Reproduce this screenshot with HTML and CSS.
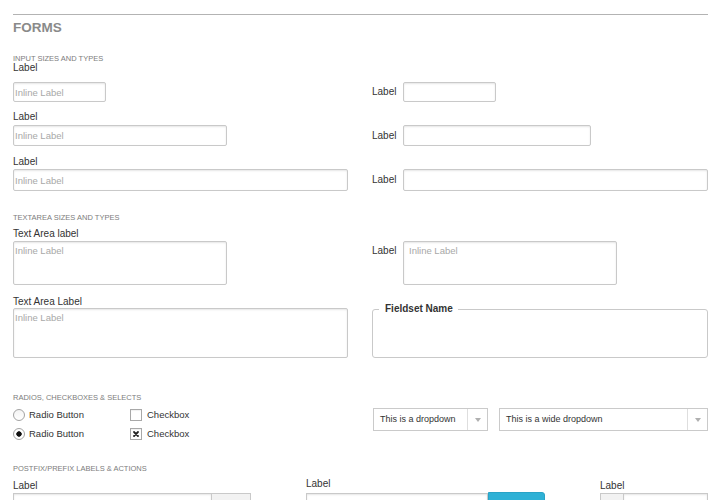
FILE: index.html
```html
<!DOCTYPE html>
<html lang="en">
<head>
<meta charset="utf-8">
<title>Forms</title>
<link rel="stylesheet" href="styles.css">
</head>
<body>
<div class="page">
  <hr class="rule">
  <h2 class="title">FORMS</h2>

  <h6 class="sub sub-inputs">Input sizes and types</h6>
  <div class="pair r1">
    <div class="stack">
      <label class="lbl">Label</label>
      <input class="in h20 w93" placeholder="Inline Label">
    </div>
    <div class="inline">
      <label class="ilbl">Label</label>
      <input class="in h20 w93">
    </div>
  </div>
  <div class="pair r2">
    <div class="stack">
      <label class="lbl">Label</label>
      <input class="in h21 w214" placeholder="Inline Label">
    </div>
    <div class="inline">
      <label class="ilbl">Label</label>
      <input class="in h21 w188">
    </div>
  </div>
  <div class="pair r3">
    <div class="stack">
      <label class="lbl">Label</label>
      <input class="in h22 wfull" placeholder="Inline Label">
    </div>
    <div class="inline">
      <label class="ilbl">Label</label>
      <input class="in h22 w305">
    </div>
  </div>

  <h6 class="sub sub-ta">Textarea sizes and types</h6>
  <div class="pair t1">
    <div class="stack">
      <label class="lbl">Text Area label</label>
      <textarea class="ta ta44 w214" placeholder="Inline Label"></textarea>
    </div>
    <div class="inline inline-top">
      <label class="ilbl ilbl-top">Label</label>
      <textarea class="ta ta44 ta-pad w214" placeholder="Inline Label"></textarea>
    </div>
  </div>
  <div class="pair t2">
    <div class="stack">
      <label class="lbl">Text Area Label</label>
      <textarea class="ta ta50 wfull" placeholder="Inline Label"></textarea>
    </div>
    <fieldset class="fs">
      <legend>Fieldset Name</legend>
    </fieldset>
  </div>

  <h6 class="sub sub-radios">Radios, checkboxes &amp; selects</h6>
  <div class="pair choices">
    <div class="choice-grid">
      <div class="opt"><span class="radio"></span><span class="opt-text">Radio Button</span></div>
      <div class="opt"><span class="check"></span><span class="opt-text">Checkbox</span></div>
      <div class="opt"><span class="radio on"></span><span class="opt-text">Radio Button</span></div>
      <div class="opt"><span class="check"><svg class="x" width="10" height="10" viewBox="0 0 10 10"><path d="M3 3 L7 7 M7 3 L3 7" stroke="#222" stroke-width="1.8" stroke-linecap="round" fill="none"/></svg></span><span class="opt-text">Checkbox</span></div>
    </div>
    <div class="selects">
      <div class="select s1"><span class="sel-text">This is a dropdown</span><span class="sel-arrow"></span></div>
      <div class="select s2"><span class="sel-text">This is a wide dropdown</span><span class="sel-arrow"></span></div>
    </div>
  </div>

  <h6 class="sub sub-postfix">Postfix/prefix labels &amp; actions</h6>
  <div class="bottom">
    <div class="grp g1">
      <label class="lbl">Label</label>
      <div class="ctl">
        <input class="in2 w199">
        <span class="fix w39">.com</span>
      </div>
    </div>
    <div class="grp g2">
      <label class="lbl">Label</label>
      <div class="ctl">
        <input class="in2 w182">
        <span class="btn">Go</span>
      </div>
    </div>
    <div class="grp g3">
      <label class="lbl">Label</label>
      <div class="ctl">
        <span class="fix w23">#</span>
        <input class="in2 w85">
      </div>
    </div>
  </div>
</div>
</body>
</html>
```

FILE: styles.css
```css
* { box-sizing: border-box; }
html, body { margin: 0; padding: 0; overflow: hidden; background: #fff; }
body { font-family: "Liberation Sans", Arial, Helvetica, sans-serif; color: #333; }

.page { width: 695px; margin-left: 13px; }

.rule { margin: 14px 0 0; border: 0; border-top: 1px solid #b3b3b3; height: 0; }

.title { margin: 5px 0 0; font-size: 13.5px; line-height: 16px; font-weight: bold; color: #8a8a8a; }

.sub { margin: 0; font-size: 7.5px; line-height: 8px; font-weight: normal; color: #7d7d7d; text-transform: uppercase; }
.sub-inputs { margin-top: 19px; }
.sub-ta { margin-top: 23px; }
.sub-radios { margin-top: 36px; }
.sub-postfix { margin-top: 25px; }

.pair { display: grid; grid-template-columns: 335px 336px; column-gap: 24px; align-items: end; }
.stack { display: flex; flex-direction: column; align-items: flex-start; }

.lbl { display: block; font-size: 10px; line-height: 10px; color: #333; }
.r1 .lbl { margin-bottom: 9px; }
.r2 { margin-top: 10px; }
.r2 .lbl { margin-bottom: 3px; }
.r3 { margin-top: 11px; }
.r3 .lbl { margin-bottom: 2px; }
.t1 { margin-top: 7px; }
.t1 .lbl { margin-bottom: 2px; }
.t2 { margin-top: 12px; }
.t2 .lbl { margin-bottom: 1px; }

.inline { display: flex; align-items: center; }
.inline-top { align-items: flex-start; }
.ilbl { flex: 0 0 31px; font-size: 10px; line-height: 10px; color: #333; }
.ilbl-top { margin-top: 5px; }

.in, .ta {
  display: block; margin: 0; background: #fff;
  border: 1px solid #c9c9c9; border-radius: 2px;
  box-shadow: inset 0 1px 2px rgba(0, 0, 0, 0.1);
  font-family: "Liberation Sans", Arial, sans-serif; font-size: 9.5px; color: #333;
  padding: 0 1px; outline: none;
}
.in::placeholder, .ta::placeholder { color: #a8a8a8; opacity: 1; }
.ta { resize: none; padding: 3px 1px; line-height: 12px; overflow: hidden; }
.ta-pad { padding-left: 5px; }

.h20 { height: 20px; }
.h21 { height: 21px; }
.h22 { height: 22px; }
.ta44 { height: 44px; }
.ta50 { height: 50px; }
.w93 { width: 93px; }
.w188 { width: 188px; }
.w214 { width: 214px; }
.w305 { width: 305px; }
.wfull { width: 335px; }

.fs { margin: 0; padding: 0 0 0 6px; border: 1px solid #c9c9c9; border-radius: 3px; height: 55px; min-width: 0; }
.fs legend { padding: 0 5px 0 6px; font-size: 10px; line-height: 12px; font-weight: bold; color: #333; }

.choices { margin-top: 6px; align-items: start; }
.choice-grid { display: grid; grid-template-columns: 117px auto; row-gap: 6px; }
.opt { display: flex; align-items: center; height: 13px; }
.opt-text { font-size: 9.5px; line-height: 13px; color: #333; margin-left: 4px; }
.radio {
  width: 12px; height: 12px; border-radius: 50%;
  border: 1px solid #a3a3a3;
  background: linear-gradient(#f4f4f4, #fff);
}
.radio.on { background: radial-gradient(circle, #111 0, #111 2.4px, #fff 3px); }
.check {
  width: 12px; height: 12px; border: 1px solid #a8a8a8; background: #fff;
  display: flex; align-items: center; justify-content: center;
  box-shadow: inset 0 1px 1px rgba(0, 0, 0, 0.06);
}
.x { display: block; }
.opt .check + .opt-text { margin-left: 5px; }

.selects { display: flex; column-gap: 11px; padding-left: 1px; }
.select { display: flex; height: 23px; border: 1px solid #cacaca; background: #fff; }
.s1 { width: 115px; }
.s2 { width: 209px; }
.sel-text { flex: 1; font-size: 9px; line-height: 20px; padding-left: 6px; color: #333; white-space: nowrap; }
.sel-arrow { flex: 0 0 20px; border-left: 1px solid #dedede; display: flex; align-items: center; justify-content: center; }
.sel-arrow::before { content: ""; width: 0; height: 0; border-left: 3px solid transparent; border-right: 3px solid transparent; border-top: 4px solid #b0b0b0; margin-top: 1px; }

.bottom { display: flex; justify-content: space-between; align-items: flex-start; margin-top: 7.5px; }
.grp .lbl { margin-bottom: 2px; }
.g2 .lbl { margin-top: -1.5px; margin-bottom: 3.5px; }
.ctl { display: flex; align-items: flex-start; }
.in2 {
  display: block; margin: 0; height: 21px; background: #fff;
  border: 1px solid #c9c9c9; border-radius: 0;
  box-shadow: inset 0 1px 2px rgba(0, 0, 0, 0.1);
  font-family: "Liberation Sans", Arial, sans-serif; font-size: 9.5px; outline: none;
}
.w199 { width: 199px; }
.w182 { width: 182px; }
.w85 { width: 85px; }
.fix {
  display: flex; align-items: center; justify-content: center;
  height: 22px; background: #f2f2f2; border: 1px solid #c9c9c9;
  font-size: 9.5px; color: #555;
}
.w39 { width: 39px; border-left: 0; }
.w23 { width: 23px; border-right: 0; }
.btn {
  display: flex; align-items: center; justify-content: center;
  width: 57px; height: 25px; margin-top: -1px;
  background: #2eb1d6; border: 1px solid #29a3c6; border-radius: 0 3px 0 0;
  color: #fff; font-size: 10px; font-weight: bold;
}
```
